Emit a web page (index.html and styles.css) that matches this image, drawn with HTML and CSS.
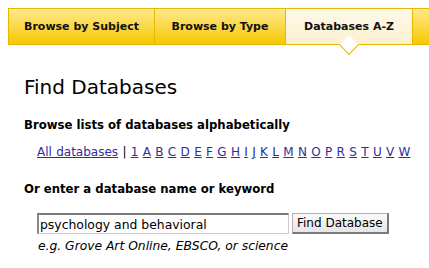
FILE: index.html
```html
<!DOCTYPE html>
<html>
<head>
<meta charset="utf-8">
<link rel="stylesheet" href="styles.css">
</head>
<body>
<nav class="tabs">
  <a class="tab t1" href="#">Browse by Subject</a>
  <a class="tab t2" href="#">Browse by Type</a>
  <a class="tab t3 active" href="#">Databases A-Z</a>
  <a class="tab t4" href="#"></a>
</nav>
<main class="content">
  <h1 class="title">Find Databases</h1>
  <h2 class="label first">Browse lists of databases alphabetically</h2>
  <p class="letters">
    <a href="#">All databases</a> | <a href="#">1</a> <a href="#">A</a> <a href="#">B</a> <a href="#">C</a> <a href="#">D</a> <a href="#">E</a> <a href="#">F</a> <a href="#">G</a> <a href="#">H</a> <a href="#">I</a> <a href="#">J</a> <a href="#">K</a> <a href="#">L</a> <a href="#">M</a> <a href="#">N</a> <a href="#">O</a> <a href="#">P</a> <a href="#">R</a> <a href="#">S</a> <a href="#">T</a> <a href="#">U</a> <a href="#">V</a> <a href="#">W</a>
  </p>
  <h2 class="label second">Or enter a database name or keyword</h2>
  <form class="search">
    <div class="row">
      <input class="field" type="text" value="psychology and behavioral">
      <button class="btn" type="button">Find Database</button>
    </div>
    <p class="hint">e.g. Grove Art Online, EBSCO, or science</p>
  </form>
</main>
</body>
</html>
```
FILE: styles.css
```css
html, body { margin: 0; padding: 0; background: #fff; }
body {
  font-family: "DejaVu Sans", Verdana, sans-serif;
  color: #000;
  width: 429px;
  height: 268px;
  overflow: hidden;
}
.tabs {
  display: flex;
  margin: 8px 0 0 8px;
  height: 37px;
  border-top: 1px solid #e8b800;
  border-bottom: 1px solid #e8b800;
  border-left: 1px solid #e8b800;
  box-sizing: border-box;
}
.tab {
  position: relative;
  display: flex;
  align-items: center;
  justify-content: center;
  flex: none;
  font-weight: bold;
  font-size: 11px;
  color: #111;
  text-decoration: none;
  background: linear-gradient(#ffe88c, #f7c800);
  border-right: 1px solid #e8b800;
  box-sizing: border-box;
}
.t1 { width: 146px; }
.t2 { width: 131px; }
.t3 { width: 127px; }
.t4 { flex: 1; border-right: 0; }
.tab.active {
  background: linear-gradient(#fdf9ea, #fcf1cf);
}
.tab.active::after {
  content: "";
  position: absolute;
  left: 50%;
  top: 100%;
  width: 14px;
  height: 14px;
  margin-left: -7px;
  margin-top: -6px;
  background: #fff;
  border-right: 1px solid #e8b800;
  border-bottom: 1px solid #e8b800;
  box-sizing: border-box;
  transform: rotate(45deg);
}
.content {
  padding: 0 0 0 24px;
}
.title {
  margin: 29px 0 0 0;
  font-size: 20px;
  font-weight: normal;
  line-height: 26px;
}
.label {
  margin: 0;
  font-size: 11.7px;
  font-weight: bold;
  line-height: 15px;
}
.label.first { margin-top: 18px; }
.letters {
  margin: 12px 0 0 13px;
  font-size: 12px;
  line-height: 15px;
  color: #000;
  word-spacing: 0.5px;
}
.letters a { color: #2e2e9c; }
.label.second { margin-top: 22px; }
.search { margin: 16px 0 0 13px; }
.row { display: flex; gap: 3px; align-items: flex-start; }
.field {
  width: 252px;
  height: 21px;
  box-sizing: border-box;
  margin: 0;
  padding: 0 1px;
  font-family: "DejaVu Sans", sans-serif;
  font-size: 12.4px;
  color: #000;
  border: 1px solid #ccc;
  border-top: 2px solid #7a7a7a;
  border-left: 2px solid #8a8a8a;
  background: #fff;
  outline: none;
}
.btn {
  height: 21px;
  margin: 0;
  padding: 0 4px;
  font-family: "DejaVu Sans", sans-serif;
  font-size: 12px;
  color: #000;
  background: linear-gradient(#fafafa, #e6e6e6);
  border: 1px solid #b0b0b0;
  border-right: 2px solid #7a7a7a;
  border-bottom: 2px solid #7a7a7a;
}
.hint {
  margin: 4px 0 0 1px;
  font-size: 12.3px;
  font-style: italic;
  line-height: 16px;
}
```
